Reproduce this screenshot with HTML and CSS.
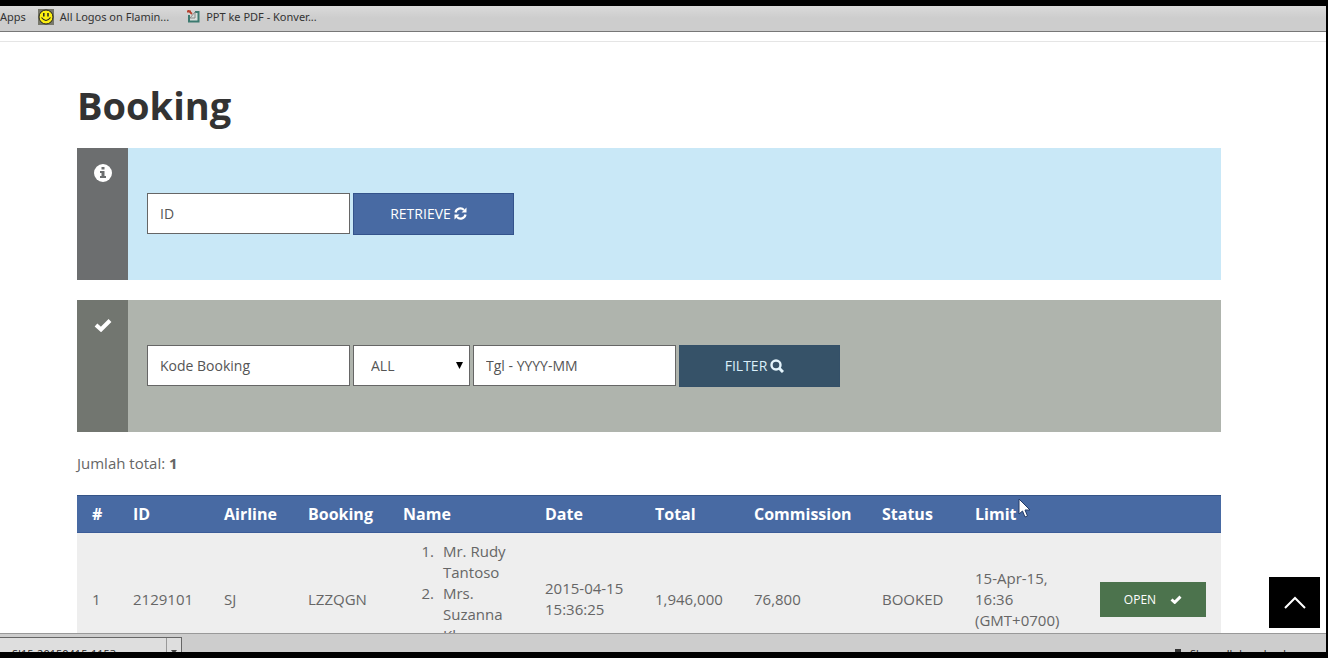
FILE: index.html
```html
<!DOCTYPE html>
<html lang="id">
<head>
<meta charset="utf-8">
<title>Booking</title>
<link rel="stylesheet" href="styles.css">
</head>
<body>
<div class="browser">
  <nav class="bookmarks" aria-label="Bookmarks">
    <a href="#apps">Apps</a>
    <a href="#logos">
      <svg class="smiley" width="16" height="16" viewBox="0 0 16 16" aria-hidden="true">
        <rect width="16" height="16" fill="#77776a"/>
        <circle cx="8" cy="8" r="7" fill="#fbee12" stroke="#222" stroke-width="1"/>
        <path d="M5.8 4v3.500M10 4v3.500" stroke="#222" stroke-width="1.500"/>
        <path d="M3.500 8.500q4.500 6 9 0" fill="none" stroke="#222" stroke-width="1.200"/>
      </svg>
      All Logos on Flamin...
    </a>
    <a href="#pdf">
      <svg class="convert" width="13" height="13" viewBox="0 0 13 13" aria-hidden="true">
        <path d="M2 5v6.500h9.500V2H8" fill="#d9e0dd" stroke="#3c7a70" stroke-width="2"/>
        <path d="M8 2v6H3z" fill="#d8dedb" stroke="#888" stroke-width="1"/>
        <path d="M0 1.500h4M1 0l4 4" stroke="#b5402c" stroke-width="1.800"/>
      </svg>
      PPT ke PDF - Konver...
    </a>
  </nav>
  <div class="viewport">
    <div class="topline"></div>
    <main class="content">
      <h1>Booking</h1>
      <section class="panel info">
        <div class="panel-icon">
          <svg width="18" height="18" viewBox="0 0 18 18" aria-hidden="true">
            <circle cx="9" cy="9" r="9" fill="#fff"/>
            <path d="M7.500 3h3v2.500h-3zM6 7h4.500v5H12v2H6v-2h1.500V9H6z" fill="#6c6e6f"/>
          </svg>
        </div>
        <form class="fields">
          <input class="box" type="text" placeholder="ID" aria-label="ID">
          <button class="action retrieve" type="button">RETRIEVE
            <svg width="13" height="13" viewBox="0 0 13 13" aria-hidden="true">
              <path d="M1.500 5.500A5 5 0 0 1 10 3M11.500 7.500A5 5 0 0 1 3 10" fill="none" stroke="#fff" stroke-width="2.200"/>
              <path d="M12.500.500v5h-5zM.500 12.500v-5h5z" fill="#fff"/>
            </svg>
          </button>
        </form>
      </section>
      <section class="panel search">
        <div class="panel-icon">
          <svg width="18" height="14" viewBox="0 0 18 14" aria-hidden="true">
            <path d="M2 7l5 4.500L16 2.500" fill="none" stroke="#fff" stroke-width="4"/>
          </svg>
        </div>
        <form class="fields">
          <input class="box" type="text" placeholder="Kode Booking" aria-label="Kode Booking">
          <span class="choice">
            <select class="box" aria-label="Status"><option>ALL</option></select>
            <svg width="7" height="7" viewBox="0 0 7 7" aria-hidden="true"><path d="M0 0h7L3.500 7z" fill="#000"/></svg>
          </span>
          <input class="box" type="text" placeholder="Tgl - YYYY-MM" aria-label="Tanggal">
          <button class="action filter" type="button">FILTER
            <svg width="14" height="14" viewBox="0 0 14 14" aria-hidden="true">
              <circle cx="6" cy="6" r="4.500" fill="none" stroke="#e4f4fc" stroke-width="2.400"/>
              <path d="M9 9l4 4" stroke="#e4f4fc" stroke-width="3"/>
            </svg>
          </button>
        </form>
      </section>
      <p class="count">Jumlah total: <strong>1</strong></p>
      <table class="bookings">
        <colgroup>
          <col class="c-no"><col class="c-id"><col class="c-airline"><col class="c-booking"><col class="c-name"><col class="c-date"><col class="c-total"><col class="c-commission"><col class="c-status"><col class="c-limit"><col>
        </colgroup>
        <thead>
          <tr><th>#</th><th>ID</th><th>Airline</th><th>Booking</th><th>Name</th><th>Date</th><th>Total</th><th>Commission</th><th>Status</th><th>Limit</th><th></th></tr>
        </thead>
        <tbody>
          <tr>
            <td>1</td><td>2129101</td><td>SJ</td><td>LZZQGN</td>
            <td><ol><li>Mr. Rudy Tantoso</li><li>Mrs. Suzanna Kho</li></ol></td>
            <td>2015-04-15 15:36:25</td><td>1,946,000</td><td>76,800</td><td>BOOKED</td>
            <td>15-Apr-15, 16:36 (GMT+0700)</td>
            <td><button class="open" type="button">OPEN
              <svg width="12" height="9" viewBox="0 0 18 14" aria-hidden="true"><path d="M2 7l5 4.500L16 2.500" fill="none" stroke="#fff" stroke-width="4.500"/></svg>
            </button></td>
          </tr>
        </tbody>
      </table>
    </main>
    <button class="to-top" type="button" aria-label="Top">
      <svg width="22" height="13" viewBox="0 0 22 13" aria-hidden="true"><path d="M1 12L11 2l10 10" fill="none" stroke="#fff" stroke-width="2"/></svg>
    </button>
    <svg class="pointer" width="13" height="20" viewBox="0 0 13 20" aria-hidden="true"><path d="M1 1v15l3.500-3 2.500 6 2.500-1L7 12h5z" fill="#fff" stroke="#223a66" stroke-width="1"/></svg>
  </div>
  <footer class="downloads">
    <div class="download"><span>SJ15-20150415-1153...</span><button type="button" aria-label="Menu"><svg width="6" height="4" viewBox="0 0 6 4" aria-hidden="true"><path d="M0 0h6L3 4z" fill="#444"/></svg></button></div>
    <a class="show-all" href="#downloads"><svg width="8" height="12" viewBox="0 0 8 12" aria-hidden="true"><path d="M1 4h6v6H1z" fill="#333"/></svg>Show all downloads...</a>
  </footer>
</div>
</body>
</html>
```
FILE: styles.css
```css
* { box-sizing: border-box; }

body {
  margin: 0;
  background: #000;
  color: #666;
  font: 15px/21px "Open Sans", "Noto Sans", sans-serif;
}

.browser {
  display: flex;
  flex-direction: column;
  height: 100vh;
  padding: 6px 2px 6px 0;
}

.bookmarks {
  display: flex;
  flex: none;
  align-items: center;
  gap: 18px;
  height: 26px;
  padding-bottom: 4px;
  border-bottom: 1px solid #777;
  background: linear-gradient(#dadada, #cdcdcd 12px);
  font-family: "Noto Sans", sans-serif;
  font-size: 11px;
}

.bookmarks a {
  display: flex;
  align-items: center;
  gap: 6px;
  color: #333;
  text-decoration: none;
  white-space: nowrap;
}

.bookmarks a:first-child { margin-right: -6px; }

.viewport {
  position: relative;
  flex: 1;
  min-height: 0;
  overflow: hidden;
  background: #fff;
}

.topline {
  height: 10px;
  border-bottom: 1px solid #e5e5e5;
}

.content {
  margin: 0 105px 0 77px;
  padding-top: 37px;
}

h1 {
  margin: 0 0 17px;
  color: #333;
  font-size: 38px;
  line-height: 52px;
}

.panel {
  display: flex;
  height: 132px;
  margin-bottom: 20px;
}

.panel-icon {
  display: flex;
  flex: none;
  align-items: flex-start;
  justify-content: center;
  width: 51px;
  padding-top: 16px;
}

.info { background: #c9e8f7; }
.info .panel-icon { background: #6c6e6f; }
.search { background: #afb4ad; }
.search .panel-icon { padding-top: 18px; background: #727670; }

.fields {
  display: flex;
  flex: 1;
  align-items: center;
  gap: 3px;
  padding: 0 0 1px 19px;
}

.box {
  width: 203px;
  height: 41px;
  padding: 0 12px;
  border: 1px solid #666;
  border-radius: 0;
  background: #fff;
  color: #555;
  font: 14px "Open Sans", sans-serif;
}

.box::placeholder { color: #555; opacity: 1; }

.choice { position: relative; }

.choice select {
  display: block;
  width: 117px;
  padding: 0 17px;
  appearance: none;
}

.choice svg {
  position: absolute;
  top: 17px;
  right: 7px;
}

.action {
  display: flex;
  align-items: center;
  justify-content: center;
  gap: 3px;
  width: 161px;
  height: 42px;
  padding: 0 10px 0 0;
  border: 1px solid #34538c;
  color: #fff;
  font: 14px "Open Sans", sans-serif;
}

.retrieve { background: #486aa3; }
.filter { border-color: #345068; background: #365268; color: #d9f0fb; }

.count { margin: 0 0 20px; padding-top: 1px; }

.bookings {
  width: 100%;
  margin-top: 21px;
  border-spacing: 0;
  table-layout: fixed;
}

.c-no { width: 41px; }
.c-id { width: 91px; }
.c-airline { width: 84px; }
.c-booking { width: 95px; }
.c-name { width: 142px; }
.c-date { width: 110px; }
.c-total { width: 99px; }
.c-commission { width: 128px; }
.c-status { width: 93px; }
.c-limit { width: 125px; }

.bookings th {
  height: 38px;
  padding: 0 0 0 15px;
  border-top: 1px solid #355487;
  border-bottom: 1px solid #3b5c98;
  background: #486aa3;
  color: #fff;
  font-size: 16px;
  text-align: left;
}

.bookings td {
  padding: 8px 15px;
  background: #eee;
}

.bookings td:nth-child(-n+4), .bookings td:nth-child(n+6) { padding-right: 0; }

.bookings ol {
  margin: 0 0 11px;
  padding-left: 40px;
  list-style: none;
  counter-reset: name;
}

.bookings li {
  position: relative;
  counter-increment: name;
}

.bookings li::before {
  position: absolute;
  right: 100%;
  margin-right: 9px;
  content: counter(name) ".";
}

.open {
  display: flex;
  align-items: center;
  justify-content: center;
  gap: 14px;
  width: 106px;
  height: 35px;
  border: 0;
  background: #4c734d;
  color: #fff;
  font: 12px "Open Sans", sans-serif;
}

.to-top {
  position: absolute;
  right: 6px;
  bottom: 5px;
  display: flex;
  align-items: center;
  justify-content: center;
  width: 51px;
  height: 51px;
  border: 0;
  background: #000;
}

.pointer {
  position: absolute;
  top: 466px;
  left: 1018px;
}

.downloads {
  display: flex;
  flex: none;
  align-items: flex-start;
  justify-content: space-between;
  height: 19px;
  padding-top: 3px;
  overflow: hidden;
  border-top: 1px solid #999;
  background: #cdcdcd;
  color: #222;
  font-size: 11px;
}

.download {
  display: flex;
  width: 182px;
  height: 30px;
  border: 1px solid #666;
  border-left: 0;
  background: #dedede;
}

.download span { flex: 1; padding: 5px 0 0 12px; }

.download button {
  display: flex;
  justify-content: center;
  width: 15px;
  padding: 12px 0 0;
  border: 0;
  border-left: 1px solid #999;
  background: #dedede;
}

.show-all {
  display: flex;
  gap: 8px;
  padding: 6px 26px 0 0;
  color: #222;
  text-decoration: none;
}

.show-all svg { margin-top: 2px; }
```
